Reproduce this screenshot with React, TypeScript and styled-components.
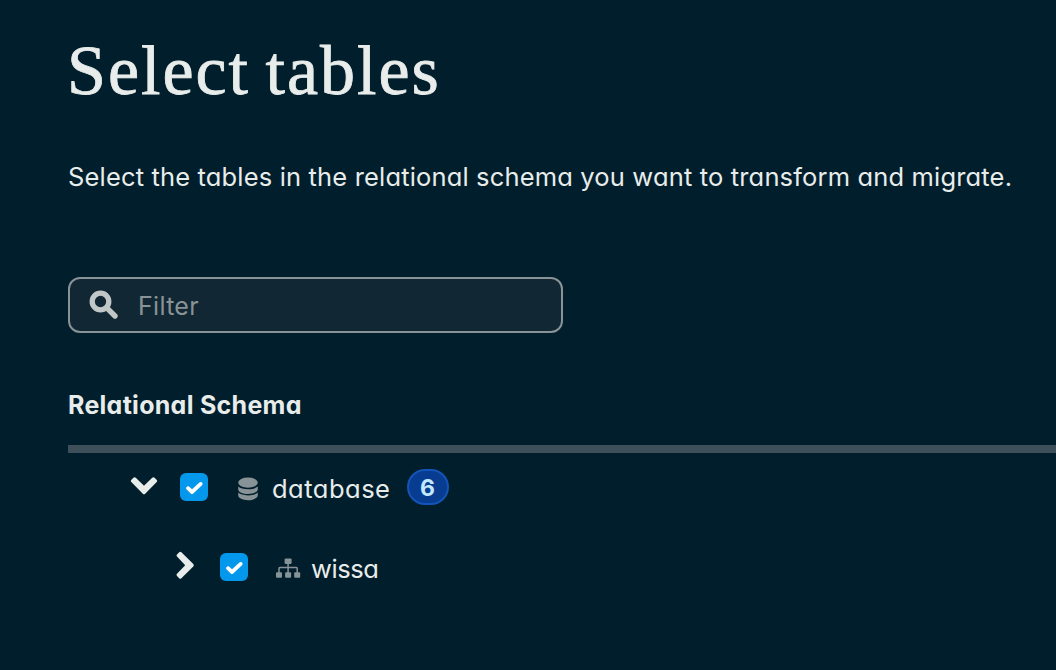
import React from 'react';
import styled, { createGlobalStyle } from 'styled-components';

const GlobalStyle = createGlobalStyle`
  * { box-sizing: border-box; }
  html, body { margin: 0; background: #001e2b; }
  body {
    color: #e8edeb;
    font-family: Inter, "Liberation Sans", sans-serif;
    font-feature-settings: "cv11" 1;
    overflow: hidden;
  }
`;

const Page = styled.main`
  display: flex;
  flex-direction: column;
  height: 670px;
  padding: 30px 0 0 68px;
  white-space: nowrap;
`;

const Title = styled.h1`
  margin: 0 0 0 -1px;
  height: 84px;
  line-height: 82px;
  font-family: "Liberation Serif", serif;
  font-size: 70px;
  font-weight: 400;
  letter-spacing: 2px;
  word-spacing: -4px;
  -webkit-text-stroke: 0.8px #e8edeb;
`;

const Description = styled.p`
  margin: 43px 0 0;
  height: 40px;
  line-height: 40px;
  font-size: 25.5px;
  letter-spacing: 0.16px;
`;

const SearchBox = styled.label`
  display: flex;
  align-items: center;
  width: 495px;
  height: 56px;
  margin-top: 80px;
  padding-left: 19px;
  gap: 18px;
  border: 2px solid #889397;
  border-radius: 12px;
  background: #112733;
`;

const SearchInput = styled.input`
  flex: 1;
  min-width: 0;
  padding: 2px 0 0;
  border: 0;
  outline: 0;
  background: transparent;
  color: #e8edeb;
  font: inherit;
  font-feature-settings: inherit;
  font-size: 25px;
  letter-spacing: 0.3px;
  &::placeholder { color: #889397; opacity: 1; }
`;

const SectionHeading = styled.h2`
  display: flex;
  align-items: center;
  height: 64px;
  margin: 40px 0 0;
  font-size: 25px;
  font-weight: 700;
  letter-spacing: 0.28px;
`;

const Divider = styled.hr`
  width: 100%;
  height: 8px;
  margin: 8px 0 0;
  border: 0;
  background: #3d4f58;
`;

const Row = styled.div<{ $indent: number }>`
  display: flex;
  align-items: center;
  height: 80px;
  padding-left: ${(p) => p.$indent}px;
  gap: 22px;
`;

const Tree = styled.section`
  margin-top: -6px;
`;

const Check = styled.span`
  display: grid;
  place-items: center;
  width: 28px;
  height: 28px;
  border-radius: 6px;
  background: #0498ec;
`;

const Item = styled.span<{ $gap: number }>`
  display: flex;
  align-items: center;
  gap: ${(p) => p.$gap}px;
  padding: 4px 0 0 5px;
  color: #889397;
`;

const Name = styled.span<{ $spacing: number }>`
  color: #e8edeb;
  font-size: 25.5px;
  line-height: 32px;
  letter-spacing: ${(p) => p.$spacing}px;
`;

const Badge = styled.span`
  display: grid;
  place-items: center;
  width: 42px;
  height: 36px;
  margin-left: -6px;
  padding-top: 1px;
  border: 2px solid #1254b7;
  border-radius: 18px;
  background: #083c90;
  color: #c3e7fe;
  font-size: 23px;
  font-weight: 700;
`;

const CheckBox = () => (
  <Check role="checkbox" aria-checked="true">
    <svg width="28" height="28" viewBox="0 0 28 28" fill="none" stroke="#fff" strokeWidth="3.8" strokeLinecap="round" strokeLinejoin="round">
      <path d="M8 15.2 12 19 20.7 10.9" />
    </svg>
  </Check>
);

const DatabaseIcon = () => (
  <svg width="26" height="24" viewBox="0 0 26 24" fill="currentColor">
    <ellipse cx="13" cy="5.6" rx="9.8" ry="5.1" />
    <path d="M3.2 9.5C5.2 11.2 8.6 12.2 13 12.2S20.8 11.2 22.8 9.5V12.2C22.8 14.9 18.4 17 13 17S3.2 14.9 3.2 12.2Z" />
    <path d="M3.2 15.6C5.2 17.4 8.6 18.4 13 18.4S20.8 17.4 22.8 15.6V18.3C22.8 21 18.4 23.2 13 23.2S3.2 21 3.2 18.3Z" />
  </svg>
);

const SchemaIcon = () => (
  <svg width="26" height="24" viewBox="0 0 26 24" fill="currentColor">
    <rect x="9.6" y="1.4" width="7" height="5.5" rx="1.2" />
    <rect x="1" y="15.2" width="6" height="5.6" rx="1" />
    <rect x="10.1" y="15.2" width="6" height="5.6" rx="1" />
    <rect x="19.2" y="15.2" width="6" height="5.6" rx="1" />
    <path d="M4 16V11.4Q4 10.6 4.8 10.6H21.4Q22.2 10.6 22.2 11.4V16M13.1 6V16" fill="none" stroke="currentColor" strokeWidth="1.5" />
  </svg>
);

export default function App() {
  return (
    <>
      <GlobalStyle />
      <Page>
        <Title>Select tables</Title>
        <Description>Select the tables in the relational schema you want to transform and migrate.</Description>
        <SearchBox>
          <svg width="31" height="31" viewBox="0 0 31 31" fill="none" stroke="#c1c7c6" strokeLinecap="round">
            <circle cx="11.5" cy="11.5" r="8.3" strokeWidth="5.3" />
            <path d="M18.3 18.3 26 26" strokeWidth="5.4" />
          </svg>
          <SearchInput placeholder="Filter" />
        </SearchBox>
        <SectionHeading>Relational Schema</SectionHeading>
        <Divider />
        <Tree>
          <Row $indent={62}>
            <svg width="28" height="28" viewBox="0 0 28 28">
              <path d="M1.2 6.9 3.4 4.7Q4.6 3.6 5.8 4.7L14 12.7 22.2 4.7Q23.4 3.6 24.6 4.7L26.8 6.9Q27.8 8 26.7 9.1L15.2 20.7Q14 21.8 12.8 20.7L1.3 9.1Q.2 8 1.2 6.9Z" fill="#e8edeb" />
            </svg>
            <CheckBox />
            <Item $gap={11}>
              <DatabaseIcon />
              <Name $spacing={0.5}>database</Name>
            </Item>
            <Badge>6</Badge>
          </Row>
          <Row $indent={102}>
            <svg width="28" height="28" viewBox="0 0 28 28" overflow="visible">
              <path d="M9.2 -0.8 7 1.4Q5.9 2.5 7 3.6L15.2 12.2 7 20.8Q5.9 21.9 7 23L9.2 25.2Q10.3 26.2 11.4 25.2L23.3 13.4Q24.4 12.2 23.3 11L11.4 -0.8Q10.3 -1.8 9.2 -0.8Z" fill="#e8edeb" />
            </svg>
            <CheckBox />
            <Item $gap={10}>
              <SchemaIcon />
              <Name $spacing={-0.4}>wissa</Name>
            </Item>
          </Row>
        </Tree>
      </Page>
    </>
  );
}
